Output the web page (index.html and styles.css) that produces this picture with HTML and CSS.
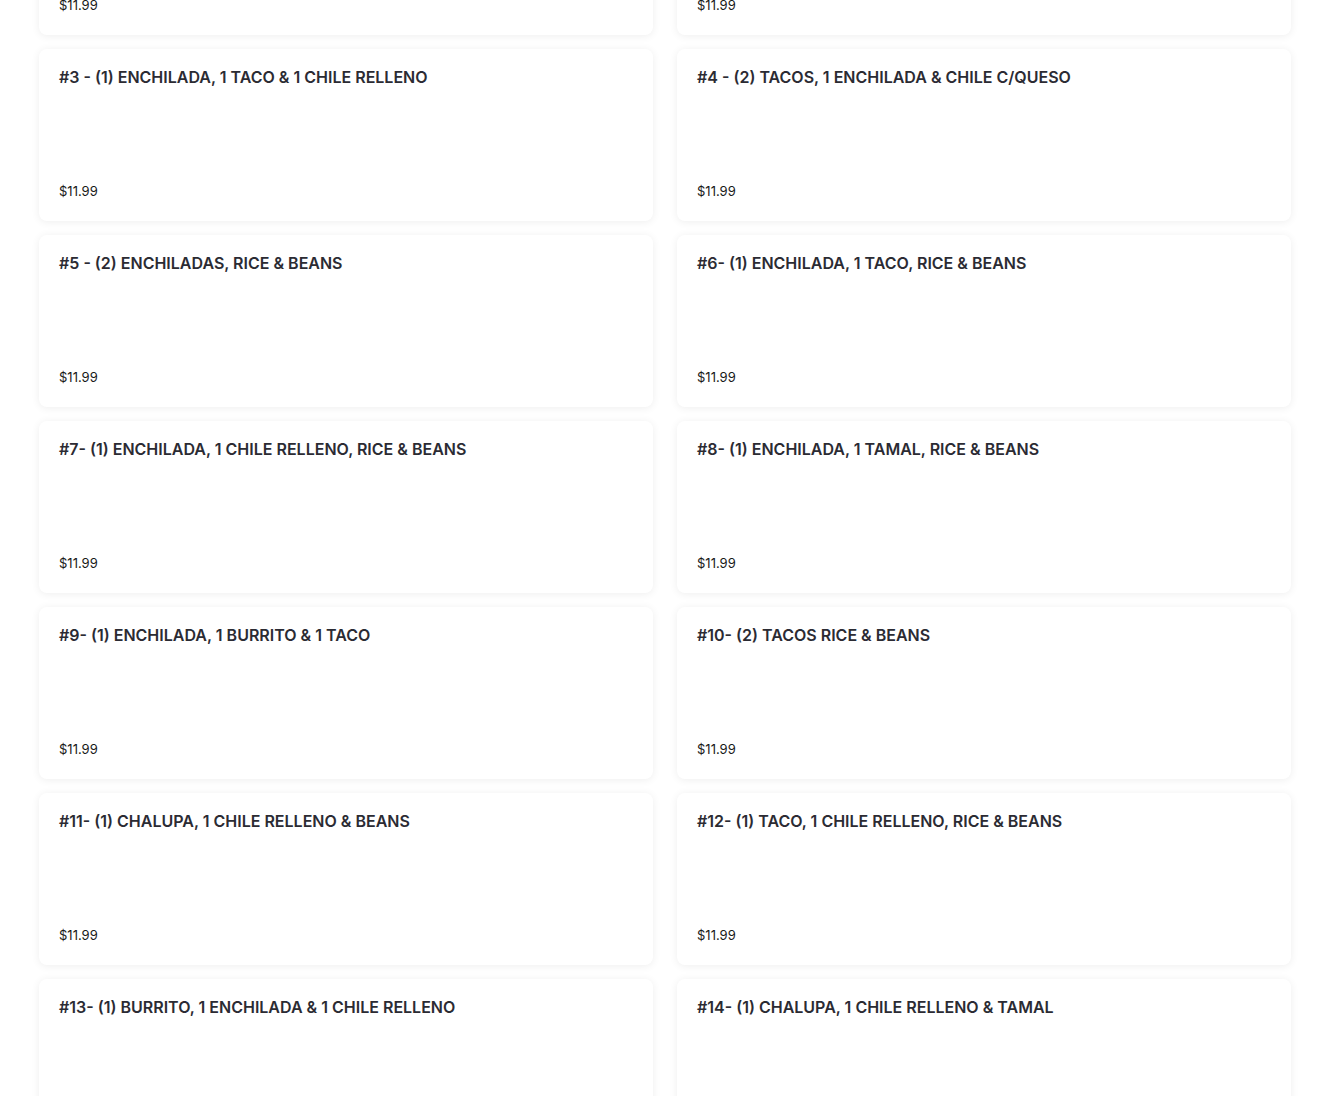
FILE: index.html
```html
<!DOCTYPE html>
<html lang="en">
<head>
    <meta charset="UTF-8">
    <meta name="viewport" content="width=device-width, initial-scale=1.0">
    <title>Combination Plates</title>
    <link rel="stylesheet" href="styles.css">
</head>
<body>
    <div class="menu-grid">
        <div class="menu-item">
            <h3 class="item-name">#1 - (2) ENCHILADAS, RICE &amp; BEANS</h3>
            <span class="item-price">$11.99</span>
        </div>
        <div class="menu-item">
            <h3 class="item-name">#2 - (1) TACO, 1 ENCHILADA, RICE &amp; BEANS</h3>
            <span class="item-price">$11.99</span>
        </div>
        <div class="menu-item">
            <h3 class="item-name">#3 - (1) ENCHILADA, 1 TACO &amp; 1 CHILE RELLENO</h3>
            <span class="item-price">$11.99</span>
        </div>
        <div class="menu-item">
            <h3 class="item-name">#4 - (2) TACOS, 1 ENCHILADA &amp; CHILE C/QUESO</h3>
            <span class="item-price">$11.99</span>
        </div>
        <div class="menu-item">
            <h3 class="item-name">#5 - (2) ENCHILADAS, RICE &amp; BEANS</h3>
            <span class="item-price">$11.99</span>
        </div>
        <div class="menu-item">
            <h3 class="item-name">#6- (1) ENCHILADA, 1 TACO, RICE &amp; BEANS</h3>
            <span class="item-price">$11.99</span>
        </div>
        <div class="menu-item">
            <h3 class="item-name">#7- (1) ENCHILADA, 1 CHILE RELLENO, RICE &amp; BEANS</h3>
            <span class="item-price">$11.99</span>
        </div>
        <div class="menu-item">
            <h3 class="item-name">#8- (1) ENCHILADA, 1 TAMAL, RICE &amp; BEANS</h3>
            <span class="item-price">$11.99</span>
        </div>
        <div class="menu-item">
            <h3 class="item-name">#9- (1) ENCHILADA, 1 BURRITO &amp; 1 TACO</h3>
            <span class="item-price">$11.99</span>
        </div>
        <div class="menu-item">
            <h3 class="item-name">#10- (2) TACOS RICE &amp; BEANS</h3>
            <span class="item-price">$11.99</span>
        </div>
        <div class="menu-item">
            <h3 class="item-name">#11- (1) CHALUPA, 1 CHILE RELLENO &amp; BEANS</h3>
            <span class="item-price">$11.99</span>
        </div>
        <div class="menu-item">
            <h3 class="item-name">#12- (1) TACO, 1 CHILE RELLENO, RICE &amp; BEANS</h3>
            <span class="item-price">$11.99</span>
        </div>
        <div class="menu-item">
            <h3 class="item-name">#13- (1) BURRITO, 1 ENCHILADA &amp; 1 CHILE RELLENO</h3>
            <span class="item-price">$11.99</span>
        </div>
        <div class="menu-item">
            <h3 class="item-name">#14- (1) CHALUPA, 1 CHILE RELLENO &amp; TAMAL</h3>
            <span class="item-price">$11.99</span>
        </div>
    </div>
</body>
</html>
```

FILE: styles.css
```css
body {
    font-family: Inter, "Noto Sans", sans-serif;
    background: #ffffff;
    color: #191919;
    margin: 0;
    padding: 0;
    overflow: hidden;
}

/* page is scrolled part-way into the list */
.menu-grid {
    display: grid;
    grid-template-columns: 1fr 1fr;
    column-gap: 24px;
    row-gap: 14px;
    padding: 0 39px;
    margin-top: -137px;
}

.menu-item {
    height: 172px;
    box-sizing: border-box;
    padding: 16px 20px 20px;
    background: #fff;
    border-radius: 8px;
    box-shadow: 0 1px 8px rgba(0, 0, 0, 0.07);
    display: flex;
    flex-direction: column;
    justify-content: space-between;
}

.item-name {
    margin: 0;
    font-size: 16px;
    line-height: 24px;
    font-weight: 600;
    color: #2b2b33;
}

.item-price {
    font-size: 13px;
    line-height: 20px;
    color: #191919;
}
```
